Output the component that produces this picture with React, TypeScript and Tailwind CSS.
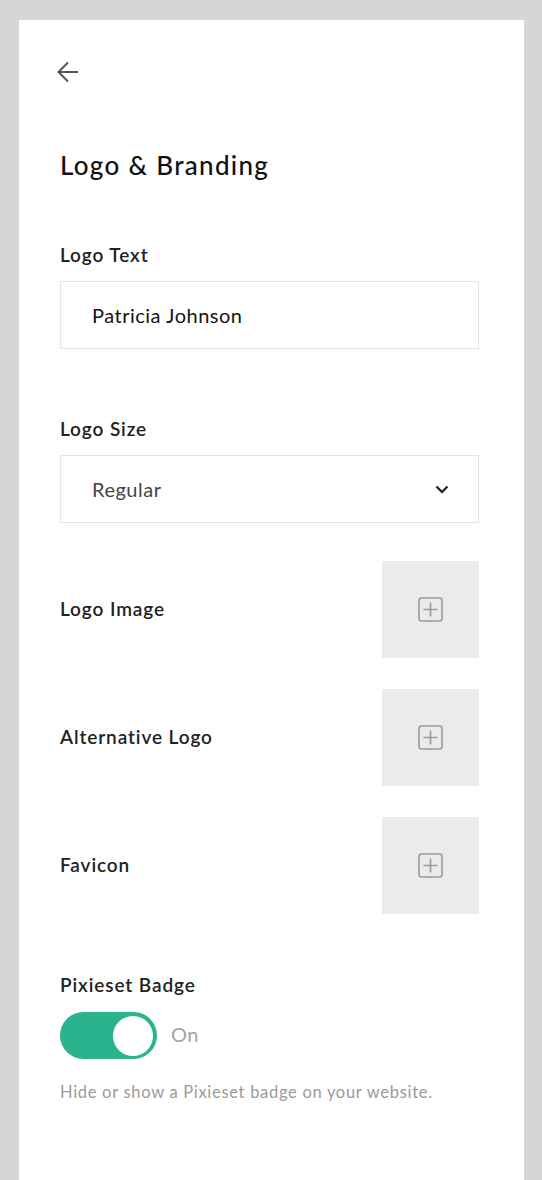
import React, { useState } from "react";

function UploadBox() {
  return (
    <button className="w-[97px] h-[97px] bg-[#ebebeb] flex items-center justify-center shrink-0">
      <svg width="25" height="25" viewBox="0 0 25 25" fill="none">
        <rect x="1" y="1" width="23" height="23" rx="2.5" stroke="#9a9a9a" strokeWidth="1.6" />
        <path d="M12.5 5.5v14M5.5 12.5h14" stroke="#9a9a9a" strokeWidth="1.6" />
      </svg>
    </button>
  );
}

function ImageRow({ label }: { label: string }) {
  return (
    <div className="flex items-center justify-between">
      <span className="text-[19px] tracking-[0.9px] font-semibold text-[#222]">{label}</span>
      <UploadBox />
    </div>
  );
}

export default function App() {
  const [badge, setBadge] = useState(true);
  return (
    <div className="min-h-[1180px] bg-[#d7d5d8] pt-[20px] pl-[19px] pr-[18px] font-['Lato',sans-serif]">
      <div className="bg-white min-h-[1160px] pt-[41px] pl-[41px] pr-[45px] pb-10">
        <button className="block ml-[-3px]" aria-label="Back">
          <svg width="22" height="22" viewBox="0 0 22 22" fill="none">
            <path d="M21 11H1.5M11 1.5L1.5 11l9.5 9.5" stroke="#555" strokeWidth="2" />
          </svg>
        </button>

        <h1 className="mt-[66px] text-[26px] leading-[32px] tracking-[1.3px] font-medium text-[#111]">
          Logo &amp; Branding
        </h1>

        <label className="block mt-[62px] text-[19px] leading-[24px] tracking-[0.9px] font-semibold text-[#222]">
          Logo Text
        </label>
        <div className="mt-[14px] h-[68px] border border-[#e4e4e4] flex items-center pl-[31px]">
          <span className="text-[20px] tracking-[0.5px] text-[#141414]">Patricia Johnson</span>
        </div>

        <label className="block mt-[68px] text-[19px] leading-[24px] tracking-[0.9px] font-semibold text-[#222]">
          Logo Size
        </label>
        <div className="mt-[14px] h-[68px] border border-[#e4e4e4] flex items-center justify-between pl-[31px] pr-[29px]">
          <span className="text-[20px] tracking-[0.5px] text-[#444]">Regular</span>
          <svg width="14" height="9" viewBox="0 0 14 9" fill="none">
            <path d="M1.5 1.5l5.5 5.5 5.5-5.5" stroke="#1e1e1e" strokeWidth="2.2" />
          </svg>
        </div>

        <div className="mt-[38px] flex flex-col gap-[31px]">
          <ImageRow label="Logo Image" />
          <ImageRow label="Alternative Logo" />
          <ImageRow label="Favicon" />
        </div>

        <div className="mt-[59px] text-[19px] leading-[24px] tracking-[0.9px] font-semibold text-[#222]">
          Pixieset Badge
        </div>
        <div className="mt-[15px] flex items-center gap-[14px]">
          <button
            onClick={() => setBadge(!badge)}
            className={
              "w-[97px] h-[47px] rounded-full flex items-center px-[4px] " +
              (badge ? "bg-[#2bb38e] justify-end" : "bg-[#d5d5d5] justify-start")
            }
          >
            <span className="w-[40px] h-[40px] rounded-full bg-white" />
          </button>
          <span className="text-[20px] tracking-[0.5px] text-[#a3a3a3] -mt-[3px]">{badge ? "On" : "Off"}</span>
        </div>
        <p className="mt-[22px] text-[16.5px] leading-[22px] tracking-[0.7px] text-[#9a9a9a]">
          Hide or show a Pixieset badge on your website.
        </p>
      </div>
    </div>
  );
}
